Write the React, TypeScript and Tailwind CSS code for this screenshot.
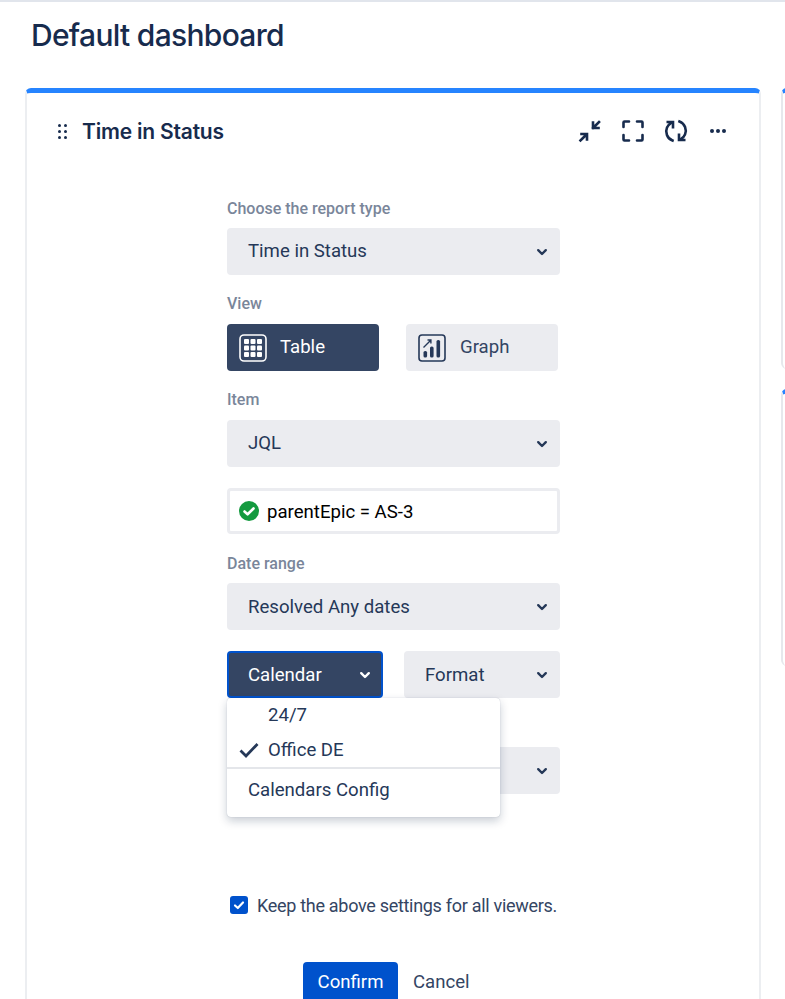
import type { ReactNode } from "react";

const roboto = "font-['Roboto',sans-serif]";

function Chevron({ className }: { className: string }) {
  return (
    <svg viewBox="0 0 12 12" className={`h-3 w-3 ${className}`} fill="none" stroke="currentColor" strokeWidth="2.4" strokeLinecap="round" strokeLinejoin="round">
      <path d="M2.2 4.2 6 8l3.8-3.8" />
    </svg>
  );
}

function Label({ children }: { children: ReactNode }) {
  return <div className="h-[17px] text-[16px] leading-[17px] font-medium text-[#7a869a]">{children}</div>;
}

function Select({ value, className = "", textClass = "" }: { value: string; className?: string; textClass?: string }) {
  return (
    <div className={`flex h-[47px] items-center justify-between rounded-[4px] bg-[#ebecf0] pr-[12px] pl-[21px] text-[18.6px] text-[#253858] ${className}`}>
      <span className={textClass}>{value}</span>
      <Chevron className="text-[#253858]" />
    </div>
  );
}

function TableIcon() {
  return (
    <svg viewBox="0 0 28 28" className="h-7 w-7" fill="none">
      <rect x="1" y="1" width="26" height="26" rx="4" stroke="#fff" strokeWidth="1.6" />
      <g fill="#fff">
        <rect x="5" y="5" width="5" height="5" rx="1" />
        <rect x="11.5" y="5" width="5" height="5" rx="1" />
        <rect x="18" y="5" width="5" height="5" rx="1" />
        <rect x="5" y="11.5" width="5" height="5" rx="1" />
        <rect x="11.5" y="11.5" width="5" height="5" rx="1" />
        <rect x="18" y="11.5" width="5" height="5" rx="1" />
        <rect x="5" y="18" width="5" height="5" rx="1" />
        <rect x="11.5" y="18" width="5" height="5" rx="1" />
        <rect x="18" y="18" width="5" height="5" rx="1" />
      </g>
    </svg>
  );
}

function GraphIcon() {
  return (
    <svg viewBox="0 0 28 28" className="h-7 w-7" fill="none">
      <rect x="1" y="1" width="26" height="26" rx="3" stroke="#253858" strokeWidth="1.6" />
      <g fill="#253858">
        <rect x="5.5" y="17" width="3.6" height="6.5" rx="1.6" />
        <rect x="12" y="12.5" width="3.6" height="11" rx="1.6" />
        <rect x="18.5" y="6" width="3.6" height="17.5" rx="1.6" />
      </g>
      <path d="M5.5 13.5 12.5 6.5M9.5 6h3.4v3.4" stroke="#253858" strokeWidth="1.4" />
    </svg>
  );
}

function CollapseIcon() {
  return (
    <svg viewBox="0 0 24 24" className="h-6 w-6" fill="none" stroke="#172b4d" strokeWidth="2.6" strokeLinecap="square">
      <path d="M2.5 21.5 8.5 15.5M3.5 15h5.5v5.5" />
      <path d="M21 3 15 9M15 3.5V9h5.5" />
    </svg>
  );
}

function FullscreenIcon() {
  return (
    <svg viewBox="0 0 24 24" className="h-6 w-6" fill="none" stroke="#172b4d" strokeWidth="2.6" strokeLinecap="round" strokeLinejoin="round">
      <path d="M8 2.5H3.5a1 1 0 0 0-1 1V8M16 2.5h4.5a1 1 0 0 1 1 1V8M8 21.5H3.5a1 1 0 0 1-1-1V16M16 21.5h4.5a1 1 0 0 0 1-1V16" />
    </svg>
  );
}

function RefreshIcon() {
  return (
    <svg viewBox="0 0 24 24" className="h-6 w-6" fill="none" stroke="#172b4d" strokeWidth="2.6" strokeLinecap="square">
      <path d="M8.5 21.5C3 19.5 1 13 3 8.5 3.8 6.7 5 5.3 6.5 4.3" />
      <path d="M3.8 3h5.2v5.2" />
      <path d="M15.5 2.5C21 4.5 23 11 21 15.5c-.8 1.8-2 3.2-3.5 4.2" />
      <path d="M20.2 21H15v-5.2" />
    </svg>
  );
}

function SideCard({ height }: { height: string }) {
  return <div className={`w-[200px] rounded-[6px] border-t-[5px] border-l-2 border-t-[#2684ff] border-l-[#e6e8ec] bg-white ${height}`} />;
}

export default function App() {
  return (
    <div className={`h-[999px] w-[785px] overflow-hidden border-t-2 border-[#e1e5ec] bg-white ${roboto}`}>
      <h1 className="mt-[14px] ml-[31px] font-['Inter',sans-serif] text-[30px] leading-[38px] font-[550] tracking-[-0.7px] text-[#172b4d]">
        Default dashboard
      </h1>

      <div className="mt-[34px] ml-[25px] flex gap-[20px]">
        <div className="h-[950px] w-[736px] shrink-0 rounded-[6px] border-x-2 border-t-[5px] border-x-[#eceef1] border-t-[#2684ff] bg-white">
          <div className="flex h-[76px] items-center pr-[33px] pl-[31px]">
            <div className="grid grid-cols-2 gap-[3px]">
              {[0, 1, 2, 3, 4, 5].map((dot) => (
                <span key={dot} className="h-[3px] w-[3px] rounded-full bg-[#172b4d]" />
              ))}
            </div>
            <h2 className="ml-[15px] pt-[2px] font-['Inter',sans-serif] text-[21px] font-semibold tracking-[-0.2px] text-[#172b4d]">Time in Status</h2>
            <div className="ml-auto flex items-center gap-[19px]">
              <CollapseIcon />
              <FullscreenIcon />
              <RefreshIcon />
              <div className="ml-[3px] flex gap-[2px]">
                <span className="h-[4px] w-[4px] rounded-full bg-[#172b4d]" />
                <span className="h-[4px] w-[4px] rounded-full bg-[#172b4d]" />
                <span className="h-[4px] w-[4px] rounded-full bg-[#172b4d]" />
              </div>
            </div>
          </div>

          <div className="ml-[200px] w-[333px]">
            <div className="mt-[31px]">
              <Label>Choose the report type</Label>
            </div>
            <Select value="Time in Status" className="mt-[11px]" />

            <div className="mt-[20px]">
              <Label>View</Label>
            </div>
            <div className="mt-[12px] flex justify-between">
              <div className="flex h-[47px] w-[152px] items-center rounded-[4px] bg-[#344563] pl-[12px] text-[18.6px] text-white">
                <TableIcon />
                <span className="ml-[13px]">Table</span>
              </div>
              <div className="mr-[2px] flex h-[47px] w-[152px] items-center rounded-[4px] bg-[#ebecf0] pl-[12px] text-[18.6px] text-[#344563]">
                <GraphIcon />
                <span className="ml-[14px]">Graph</span>
              </div>
            </div>

            <div className="mt-[20px]">
              <Label>Item</Label>
            </div>
            <Select value="JQL" className="mt-[12px]" />

            <div className="mt-[21px] flex h-[46px] items-center rounded-[4px] border-[3px] border-[#ebecf0] bg-white pl-[9px] text-[18.6px]">
              <svg viewBox="0 0 20 20" className="h-5 w-5">
                <circle cx="10" cy="10" r="10" fill="#149a3f" />
                <path d="M5.5 10.5 8.6 13.3 14.5 7.5" fill="none" stroke="#fff" strokeWidth="2.6" strokeLinecap="round" strokeLinejoin="round" />
              </svg>
              <span className="ml-[8px] pt-[4px] text-black">parentEpic = AS-3</span>
            </div>

            <div className="mt-[21px]">
              <Label>Date range</Label>
            </div>
            <Select value="Resolved Any dates" className="mt-[11px]" textClass="pt-[2px]" />

            <div className="relative mt-[21px] flex justify-between">
              <div className="flex h-[47px] w-[156px] items-center justify-between rounded-[4px] border-2 border-[#0052cc] bg-[#344563] pr-[10px] pl-[19px] text-[18.6px] text-white">
                <span className="pt-[2px]">Calendar</span>
                <Chevron className="text-white" />
              </div>
              <Select value="Format" className="w-[156px]" textClass="pt-[2px]" />

              <div className="absolute top-[47px] left-0 z-10 h-[119px] w-[273px] rounded-[4px] bg-white text-[18.6px] text-[#253858] shadow-[0_4px_10px_rgba(9,30,66,0.22),0_0_1px_rgba(9,30,66,0.3)]">
                <div className="flex h-[34px] items-center pt-[2px] pl-[41px]">24/7</div>
                <div className="flex h-[35px] items-center pl-[12px]">
                  <svg viewBox="0 0 20 16" className="h-[16px] w-[20px]" fill="none" stroke="#253858" strokeWidth="2.8">
                    <path d="M1.5 8.5 7 14 18.5 2" />
                  </svg>
                  <span className="ml-[9px] pt-[2px]">Office DE</span>
                </div>
                <div className="h-[2px] bg-[#e4e6ea]" />
                <div className="flex h-[40px] items-center pt-[4px] pl-[21px]">Calendars Config</div>
              </div>
            </div>

            <Select value="" className="mt-[49px]" />

            <div className="mt-[97px] ml-[3px] flex items-center whitespace-nowrap">
              <span className="flex h-[18px] w-[18px] shrink-0 items-center justify-center rounded-[3px] bg-[#0052cc]">
                <svg viewBox="0 0 12 12" className="h-3 w-3" fill="none" stroke="#fff" strokeWidth="2.2" strokeLinecap="round" strokeLinejoin="round">
                  <path d="M2 6.5 4.8 9 10 3.5" />
                </svg>
              </span>
              <span className="ml-[9px] pt-[1px] text-[18px] tracking-[-0.3px] text-[#344563]">Keep the above settings for all viewers.</span>
            </div>

            <div className="mt-[43px] ml-[76px] flex items-center">
              <div className="flex h-[38px] w-[95px] items-center justify-center rounded-t-[4px] bg-[#0052cc] pt-[4px] text-[18.6px] text-white">Confirm</div>
              <span className="ml-[15px] pt-[4px] text-[18.6px] text-[#344563]">Cancel</span>
            </div>
          </div>
        </div>

        <div className="flex shrink-0 flex-col gap-[20px]">
          <SideCard height="h-[281px]" />
          <SideCard height="h-[277px]" />
        </div>
      </div>
    </div>
  );
}
